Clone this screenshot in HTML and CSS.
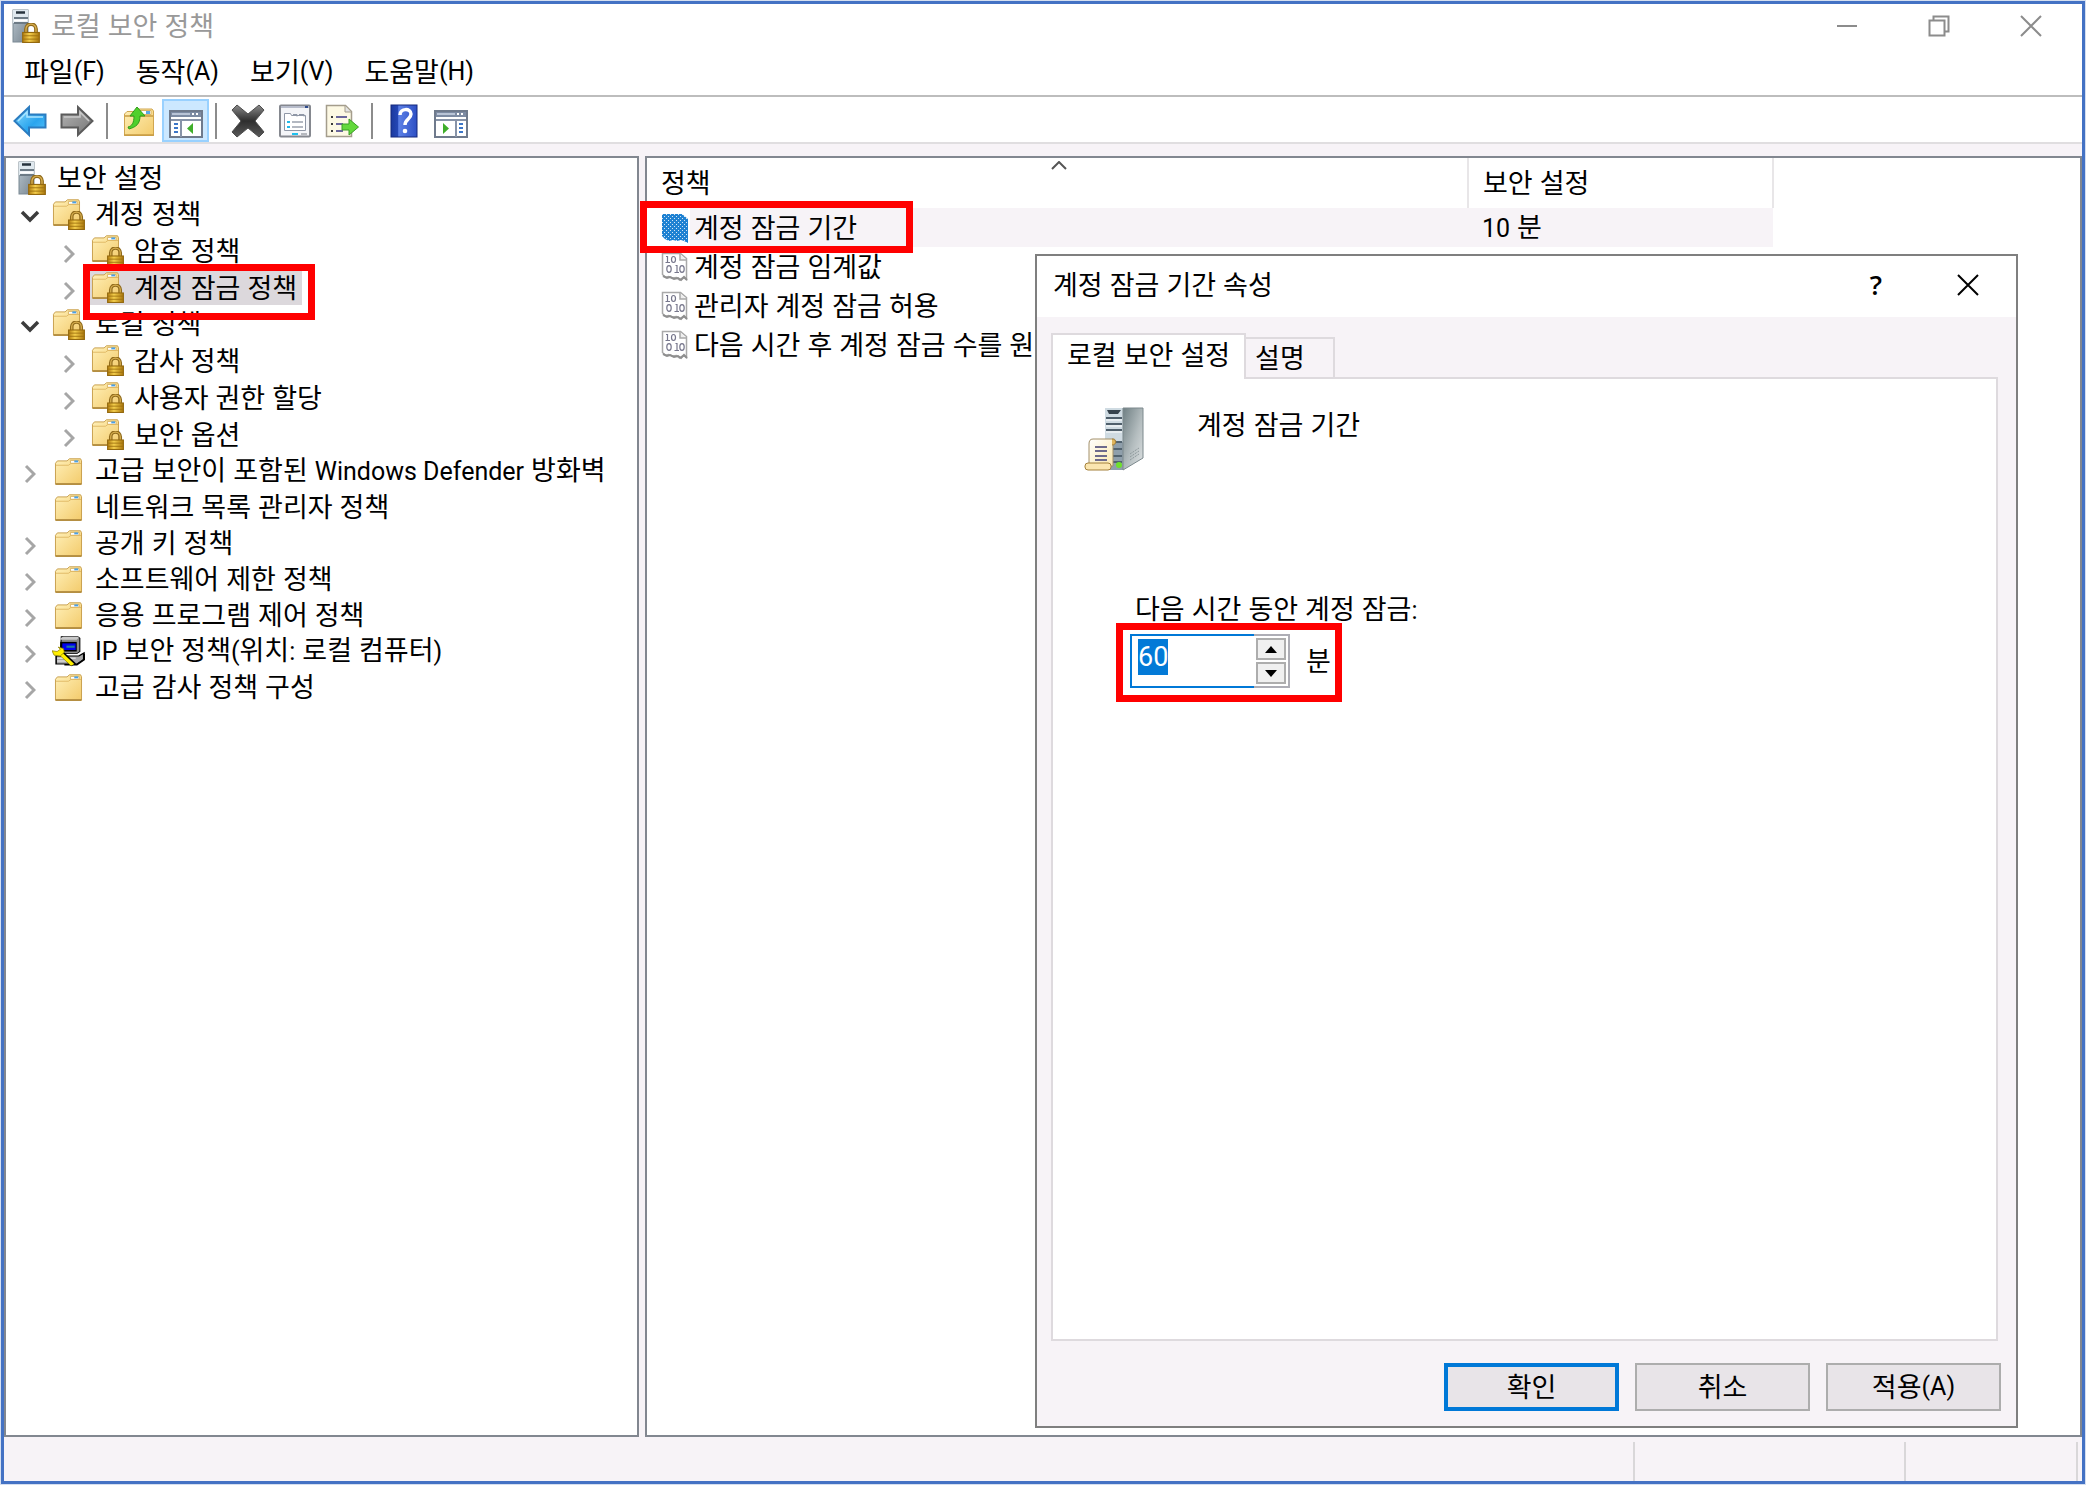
FILE: index.html
```html
<!DOCTYPE html>
<html lang="ko">

<head>
    <meta charset="UTF-8">
    <meta name="viewport" content="width=device-width, initial-scale=1.0">
    <title>로컬 보안 정책</title>
    <link rel="stylesheet" href="styles.css">
</head>

<body>
    <svg class="defs" aria-hidden="true">
        <defs>
            <linearGradient id="gFolder" x1="0" y1="0" x2="1" y2="1">
                <stop offset="0" stop-color="#fff0b8" />
                <stop offset="1" stop-color="#f3cb6c" />
            </linearGradient>
            <linearGradient id="gLock" x1="0" y1="0" x2="1" y2="0">
                <stop offset="0" stop-color="#b17c10" />
                <stop offset=".4" stop-color="#f5cf4c" />
                <stop offset="1" stop-color="#a8750c" />
            </linearGradient>
            <linearGradient id="gTower" x1="0" y1="0" x2="1" y2="1">
                <stop offset="0" stop-color="#b9c6cf" />
                <stop offset="1" stop-color="#77848f" />
            </linearGradient>
            <linearGradient id="gSide" x1="0" y1="0" x2="1" y2="1">
                <stop offset="0" stop-color="#6f7f83" />
                <stop offset=".55" stop-color="#b4bdbf" />
                <stop offset="1" stop-color="#dfe3e4" />
            </linearGradient>
            <linearGradient id="gBlue" x1="0" y1="0" x2="1" y2="1">
                <stop offset="0" stop-color="#8bdcff" />
                <stop offset=".6" stop-color="#2aa5ee" />
                <stop offset="1" stop-color="#58c4fa" />
            </linearGradient>
            <linearGradient id="gGray" x1="0" y1="0" x2="1" y2="1">
                <stop offset="0" stop-color="#b5b5b5" />
                <stop offset="1" stop-color="#757575" />
            </linearGradient>
            <linearGradient id="gCross" x1="0" y1="0" x2="0" y2="1">
                <stop offset="0" stop-color="#8a8a8a" />
                <stop offset=".5" stop-color="#2e2e2e" />
                <stop offset="1" stop-color="#5a5a5a" />
            </linearGradient>
            <linearGradient id="gHelp" x1="0" y1="0" x2="1" y2="0">
                <stop offset="0" stop-color="#1c3a9e" />
                <stop offset=".25" stop-color="#2446b4" />
                <stop offset=".3" stop-color="#5c80e6" />
                <stop offset="1" stop-color="#2d4fc4" />
            </linearGradient>
            <linearGradient id="gPaper" x1="0" y1="0" x2="1" y2="1">
                <stop offset="0" stop-color="#ffffff" />
                <stop offset="1" stop-color="#fbe7a8" />
            </linearGradient>
            <pattern id="pDots" width="4" height="4" patternUnits="userSpaceOnUse">
                <rect width="4" height="4" fill="#1f82d2" />
                <rect x="1" y="1" width="1" height="1" fill="#d4e6f5" />
                <rect x="3" y="3" width="1" height="1" fill="#d4e6f5" />
            </pattern>
        </defs>

        <symbol id="lock" viewBox="0 0 16 18">
            <path d="M3.5 9V5.500a4.500 4.500 0 0 1 9 0V9" fill="none" stroke="#8f6a1c" stroke-width="3.400" />
            <path d="M3.500 9V5.500a4.500 4.500 0 0 1 9 0V9" fill="none" stroke="#d9b050" stroke-width="1.200" />
            <rect x=".5" y="8.500" width="15" height="9" fill="url(#gLock)" stroke="#94690f" />
            <path d="M1 11.500h14M1 14.500h14" stroke="#9c700f" stroke-width=".8" />
        </symbol>

        <symbol id="server-lock" viewBox="0 0 28 34">
            <rect x="1" y="1" width="15" height="32" fill="url(#gTower)" stroke="#7b8994" />
            <path d="M1 1h15v13H1z" fill="#dfe8ee" />
            <path d="M4 3.500h9" stroke="#27333d" stroke-width="2.500" />
            <path d="M2 9h14M2 14h14" stroke="#6d7b86" stroke-width="2" />
            <path d="M2 11.500h13" stroke="#fff" stroke-width="2" />
            <use href="#lock" x="10" y="14" width="18" height="20" />
        </symbol>

        <symbol id="folder" viewBox="0 0 30 28">
            <path d="M1.500 5.500 3.500 3h10L16 .8h11.500l1 2V27h-27z" fill="url(#gFolder)" stroke="#c89f4c" />
            <path d="M17 2.500h9v3h-9z" fill="#fff" stroke="#d9b566" />
            <path d="M21 2.500h4v2h-4z" fill="#4aa0e6" />
            <path d="M2 7.500h13l2.500-1.800H28" fill="none" stroke="#e0b965" />
            <path d="M1.500 27h27" stroke="#b58f42" stroke-width="2" />
        </symbol>

        <symbol id="folder-lock" viewBox="0 0 33 31">
            <use href="#folder" x="0" y="0" width="29" height="27" />
            <use href="#lock" x="16" y="12" width="17" height="19" />
        </symbol>

        <symbol id="ip-policy" viewBox="0 0 32 42" preserveAspectRatio="none">
            <path d="M9 1h16l2 2v18l-3 3H8z" fill="#8c8c8c" stroke="#000" />
            <path d="M8 3l3-2h14l1 1-2 3H8z" fill="#c9c9c9" />
            <path d="M8 8h16v13H8z" fill="#000" />
            <path d="M10 10h13v9H10z" fill="#0000f0" />
            <path d="M14 13h8v3h-8z" fill="#1c7a9c" />
            <path d="M4 27h22l5-4v9l-7 6H4z" fill="#a8a8a8" stroke="#000" stroke-width="1.500" />
            <path d="M5 30h18M5 34h14" stroke="#dcdcdc" stroke-width="2" />
            <path d="M31 24v8l-7 7H12" fill="none" stroke="#000" stroke-width="2" />
            <path d="M8 22 21 39" stroke="#000" stroke-width="6" />
            <path d="M7 22 20 39" stroke="#ffee00" stroke-width="4" />
            <path d="M0 20l5 1 3-3-2-3 5 2 1 5-4 5-6-1z" fill="#ffee00" stroke="#8a7a00" stroke-width=".8" />
        </symbol>

        <symbol id="policy-doc" viewBox="0 0 28 30">
            <path d="M1.500 1.500h18l6 5v21l-3-2-4 2.500-3-2.500-4 .5-4-1.500-3 1-3-3z" fill="#fff" stroke="#a9a9a9" stroke-width="1.500" />
            <path d="M19 2v6h6" fill="#eee" stroke="#a9a9a9" stroke-width="1.500" />
            <path d="M2 24l4 2 3-1 4 2 4-1 3 2 3-3 3 3" fill="none" stroke="#8f8f8f" stroke-width="2" />
            <g fill="none" stroke="#77778c" stroke-width="1.200">
                <path d="M5 4.500h1.500v6M4.500 10.500H9M14.500 13.500H16v7M13.500 20.500H18" />
                <ellipse cx="12.500" cy="7.500" rx="2" ry="3" />
                <ellipse cx="8" cy="17" rx="2.200" ry="3.300" />
                <ellipse cx="21" cy="17" rx="2.200" ry="3.300" />
            </g>
        </symbol>

        <symbol id="policy-doc-selected" viewBox="0 0 28 30">
            <path d="M1 1h20l6 5v24l-4-2-3-1-4 1-4-1-4 1-4-2-3-3z" fill="url(#pDots)" />
        </symbol>

        <symbol id="chev-down" viewBox="0 0 20 14">
            <path d="M2 3l8 8 8-8" fill="none" stroke="#3c3c3c" stroke-width="3.500" />
        </symbol>

        <symbol id="chev-right" viewBox="0 0 12 20">
            <path d="M2 2l8 8-8 8" fill="none" stroke="#a6a6a6" stroke-width="3" />
        </symbol>

        <symbol id="console" viewBox="0 0 34 28">
            <rect x="1" y="1" width="32" height="26" fill="#fff" stroke="#6f7a8c" stroke-width="2" />
            <path d="M2 2h30v5H2z" fill="#7d8ba3" />
            <path d="M3 4h18" stroke="#b9c4d6" stroke-width="2" />
            <path d="M23 4h2M27 4h2" stroke="#fff" stroke-width="2" />
            <path d="M2 10h30" stroke="#8793a8" stroke-width="2" />
        </symbol>
    </svg>

    <div class="app">
        <header class="titlebar">
            <svg class="app-icon" aria-hidden="true"><use href="#server-lock" /></svg>
            <h1>로컬 보안 정책</h1>
            <div class="window-controls">
                <button type="button" aria-label="최소화">
                    <svg viewBox="0 0 22 22"><path d="M1 11h20" /></svg>
                </button>
                <button type="button" aria-label="이전 크기로 복원">
                    <svg viewBox="0 0 22 22"><path d="M1.500 5.500h15v15h-15zM5.500 5V1.500h15v15H17" /></svg>
                </button>
                <button type="button" aria-label="닫기">
                    <svg viewBox="0 0 22 22"><path d="M1 1l20 20M21 1 1 21" /></svg>
                </button>
            </div>
        </header>

        <nav class="menubar">
            <button type="button">파일<span class="latin">(F)</span></button>
            <button type="button">동작<span class="latin">(A)</span></button>
            <button type="button">보기<span class="latin">(V)</span></button>
            <button type="button">도움말<span class="latin">(H)</span></button>
        </nav>

        <div class="toolbar">
            <button type="button" aria-label="뒤로">
                <svg viewBox="0 0 34 34">
                    <path d="M1.500 17 16 3v7.500h16.500v13H16V31z" fill="url(#gBlue)" stroke="#2b7cc0" stroke-width="2" />
                    <path d="M5 17 14 8v5h16" fill="none" stroke="#a9e4ff" stroke-width="1.500" />
                </svg>
            </button>
            <button type="button" aria-label="앞으로">
                <svg viewBox="0 0 34 34">
                    <path d="M32.500 17 18 3v7.500H1.500v13H18V31z" fill="url(#gGray)" stroke="#5b5b5b" stroke-width="2" />
                    <path d="M4 13h16V8l9 9" fill="none" stroke="#c9c9c9" stroke-width="1.500" />
                </svg>
            </button>
            <span class="separator"></span>
            <button type="button" aria-label="한 수준 위로">
                <svg viewBox="0 0 34 34">
                    <path d="M2.500 10 5 7.500h8L16 5h14l1.500 2v24.500h-29z" fill="url(#gFolder)" stroke="#d0a650" />
                    <path d="M18 6.500h11v4H18z" fill="#fff" stroke="#d9b566" />
                    <path d="M24 7h4v3h-4z" fill="#5aa8e4" />
                    <path d="M3 12h28M2 31h30" stroke="#c89c43" stroke-width="1.500" />
                    <path d="M6 23c4-1 6-4 6-11H8l7-9 8 9h-5c0 8-4 11-11 13z" fill="#4fd02c" stroke="#2f9c1a" />
                </svg>
            </button>
            <button type="button" class="active" aria-label="콘솔 트리 표시/숨기기">
                <svg viewBox="0 0 34 34">
                    <use href="#console" y="6" width="34" height="28" />
                    <path d="M12 17v16" stroke="#8793a8" stroke-width="2" />
                    <path d="M5 20h4M5 24h4M5 28h4" stroke="#3c76c8" stroke-width="2" />
                    <path d="M24 19v11l-6-5.500z" fill="#3fae2a" />
                </svg>
            </button>
            <span class="separator"></span>
            <button type="button" aria-label="삭제">
                <svg viewBox="0 0 34 34">
                    <path d="M1 6l5-5 11 9L28 1l5 5-9 11 9 11-5 5-11-9-11 9-5-5 9-11z" fill="url(#gCross)" stroke="#4d4d4d" stroke-linejoin="round" />
                </svg>
            </button>
            <button type="button" aria-label="속성">
                <svg viewBox="0 0 34 34">
                    <rect x="2" y="1.500" width="30" height="31" rx="1" fill="#f4f5f8" stroke="#85888f" stroke-width="2" />
                    <path d="M3 3h28" stroke="#b7bccb" stroke-width="2" />
                    <path d="M27 3h3" stroke="#2f4b8c" stroke-width="2" />
                    <path d="M6.500 9.500h6l1 2h14v15h-21z" fill="#fff" stroke="#8f97a6" />
                    <path d="M15 10.500h4v2M21 10.500h5v2" fill="none" stroke="#8f97a6" />
                    <path d="M9 18h3M9 23h3" stroke="#22b8e8" stroke-width="2" />
                    <path d="M14 18h11M14 23h11" stroke="#9aa1ad" stroke-width="1.500" />
                    <path d="M14 30h6" stroke="#1fc0ee" stroke-width="2" />
                    <path d="M23 30h6" stroke="#b5b8be" stroke-width="2" />
                </svg>
            </button>
            <button type="button" aria-label="목록 내보내기">
                <svg viewBox="0 0 34 34">
                    <path d="M1.500 1.500h19l6 6v25h-25z" fill="#fdf9e4" stroke="#a49d8c" stroke-width="1.500" />
                    <path d="M20 2v6h6" fill="#e4e4e4" stroke="#a49d8c" />
                    <path d="M6 13h2M6 20h2M6 27h2" stroke="#3a3a3a" stroke-width="2" />
                    <path d="M11 13h11M11 20h7M11 27h7" stroke="#6b679c" stroke-width="2" />
                    <path d="M17 20h7v-5l9.500 8-9.500 8v-5h-7z" fill="#63d93c" stroke="#3a9e26" />
                </svg>
            </button>
            <span class="separator"></span>
            <button type="button" aria-label="도움말">
                <svg viewBox="0 0 34 34">
                    <rect x="4" y="1" width="26" height="32" fill="url(#gHelp)" stroke="#14297c" />
                    <path d="M13 11c0-7 11-7 11-1 0 5-6 5-6 11" fill="none" stroke="#fff" stroke-width="3.500" />
                    <circle cx="18" cy="27" r="2.300" fill="#fff" />
                </svg>
            </button>
            <button type="button" aria-label="작업 창 표시/숨기기">
                <svg viewBox="0 0 34 34">
                    <use href="#console" y="6" width="34" height="28" />
                    <path d="M22 17v16" stroke="#8793a8" stroke-width="2" />
                    <path d="M25 20h4M25 24h4M25 28h4" stroke="#3c76c8" stroke-width="2" />
                    <path d="M9 19v11l6-5.500z" fill="#3fae2a" />
                </svg>
            </button>
        </div>

        <main class="panes">
            <nav class="pane tree" aria-label="보안 설정">
                <div class="row root">
                    <svg class="icon-server" aria-hidden="true"><use href="#server-lock" /></svg>
                    <span>보안 설정</span>
                </div>
                <ul>
                    <li>
                        <div class="row">
                            <button type="button" class="toggle" aria-label="축소"><svg class="down"><use href="#chev-down" /></svg></button>
                            <a href="#"><svg class="icon"><use href="#folder-lock" /></svg>계정 정책</a>
                        </div>
                        <ul>
                            <li>
                                <div class="row">
                                    <button type="button" class="toggle" aria-label="확장"><svg class="right"><use href="#chev-right" /></svg></button>
                                    <a href="#"><svg class="icon"><use href="#folder-lock" /></svg>암호 정책</a>
                                </div>
                            </li>
                            <li>
                                <div class="row">
                                    <button type="button" class="toggle" aria-label="확장"><svg class="right"><use href="#chev-right" /></svg></button>
                                    <a href="#" class="selected"><svg class="icon"><use href="#folder-lock" /></svg>계정 잠금 정책</a>
                                    <span class="mark mark-tree"></span>
                                </div>
                            </li>
                        </ul>
                    </li>
                    <li>
                        <div class="row">
                            <button type="button" class="toggle" aria-label="축소"><svg class="down"><use href="#chev-down" /></svg></button>
                            <a href="#"><svg class="icon"><use href="#folder-lock" /></svg>로컬 정책</a>
                        </div>
                        <ul>
                            <li>
                                <div class="row">
                                    <button type="button" class="toggle" aria-label="확장"><svg class="right"><use href="#chev-right" /></svg></button>
                                    <a href="#"><svg class="icon"><use href="#folder-lock" /></svg>감사 정책</a>
                                </div>
                            </li>
                            <li>
                                <div class="row">
                                    <button type="button" class="toggle" aria-label="확장"><svg class="right"><use href="#chev-right" /></svg></button>
                                    <a href="#"><svg class="icon"><use href="#folder-lock" /></svg>사용자 권한 할당</a>
                                </div>
                            </li>
                            <li>
                                <div class="row">
                                    <button type="button" class="toggle" aria-label="확장"><svg class="right"><use href="#chev-right" /></svg></button>
                                    <a href="#"><svg class="icon"><use href="#folder-lock" /></svg>보안 옵션</a>
                                </div>
                            </li>
                        </ul>
                    </li>
                    <li>
                        <div class="row">
                            <button type="button" class="toggle" aria-label="확장"><svg class="right"><use href="#chev-right" /></svg></button>
                            <a href="#"><svg class="icon plain"><use href="#folder" /></svg><span>고급 보안이 포함된 <span class="latin">Windows Defender</span> 방화벽</span></a>
                        </div>
                    </li>
                    <li>
                        <div class="row">
                            <span class="toggle"></span>
                            <a href="#"><svg class="icon plain"><use href="#folder" /></svg>네트워크 목록 관리자 정책</a>
                        </div>
                    </li>
                    <li>
                        <div class="row">
                            <button type="button" class="toggle" aria-label="확장"><svg class="right"><use href="#chev-right" /></svg></button>
                            <a href="#"><svg class="icon plain"><use href="#folder" /></svg>공개 키 정책</a>
                        </div>
                    </li>
                    <li>
                        <div class="row">
                            <button type="button" class="toggle" aria-label="확장"><svg class="right"><use href="#chev-right" /></svg></button>
                            <a href="#"><svg class="icon plain"><use href="#folder" /></svg>소프트웨어 제한 정책</a>
                        </div>
                    </li>
                    <li>
                        <div class="row">
                            <button type="button" class="toggle" aria-label="확장"><svg class="right"><use href="#chev-right" /></svg></button>
                            <a href="#"><svg class="icon plain"><use href="#folder" /></svg>응용 프로그램 제어 정책</a>
                        </div>
                    </li>
                    <li>
                        <div class="row">
                            <button type="button" class="toggle" aria-label="확장"><svg class="right"><use href="#chev-right" /></svg></button>
                            <a href="#"><svg class="icon"><use href="#ip-policy" /></svg><span><span class="latin">IP</span> 보안 정책<span class="latin">(</span>위치<span class="latin">:</span> 로컬 컴퓨터<span class="latin">)</span></span></a>
                        </div>
                    </li>
                    <li>
                        <div class="row">
                            <button type="button" class="toggle" aria-label="확장"><svg class="right"><use href="#chev-right" /></svg></button>
                            <a href="#"><svg class="icon plain"><use href="#folder" /></svg>고급 감사 정책 구성</a>
                        </div>
                    </li>
                </ul>
            </nav>

            <section class="pane list">
                <table>
                    <thead>
                        <tr>
                            <th class="col-policy">
                                정책
                                <svg class="sort" viewBox="0 0 16 9"><path d="M1 8l7-7 7 7" /></svg>
                            </th>
                            <th class="col-setting">보안 설정</th>
                        </tr>
                    </thead>
                    <tbody>
                        <tr class="current">
                            <td>
                                <div class="policy"><svg><use href="#policy-doc-selected" /></svg>계정 잠금 기간</div>
                                <span class="mark mark-list"></span>
                            </td>
                            <td><span class="latin">10</span> 분</td>
                        </tr>
                        <tr>
                            <td><div class="policy"><svg><use href="#policy-doc" /></svg>계정 잠금 임계값</div></td>
                            <td></td>
                        </tr>
                        <tr>
                            <td><div class="policy"><svg><use href="#policy-doc" /></svg>관리자 계정 잠금 허용</div></td>
                            <td></td>
                        </tr>
                        <tr>
                            <td><div class="policy"><svg><use href="#policy-doc" /></svg>다음 시간 후 계정 잠금 수를 원</div></td>
                            <td></td>
                        </tr>
                    </tbody>
                </table>
            </section>
        </main>

        <footer class="statusbar">
            <span></span>
            <span></span>
            <span></span>
        </footer>

        <section class="dialog" role="dialog" aria-labelledby="dialogTitle">
            <header class="dialog-title">
                <h2 id="dialogTitle">계정 잠금 기간 속성</h2>
                <button type="button" class="help" aria-label="도움말">?</button>
                <button type="button" aria-label="닫기">
                    <svg viewBox="0 0 22 22"><path d="M1 1l20 20M21 1 1 21" /></svg>
                </button>
            </header>

            <div class="tabs" role="tablist">
                <button type="button" role="tab" class="tab active" aria-selected="true">로컬 보안 설정</button>
                <button type="button" role="tab" class="tab" aria-selected="false">설명</button>
            </div>

            <div class="tab-panel" role="tabpanel">
                <div class="policy-head">
                    <svg viewBox="0 0 60 64" aria-hidden="true">
                        <path d="M21 1h18v62H21z" fill="#8f9fab" />
                        <path d="M21 1h18v34H21z" fill="#cfdbe2" />
                        <path d="M23 3h14l-3 4H25z" fill="#36434d" />
                        <path d="M22 11h16M22 17h16M22 23h16" stroke="#4f5f6b" stroke-width="2" />
                        <path d="M22 13h16M22 19h16M22 25h16" stroke="#fff" />
                        <path d="M22 35h16M22 42h16M22 49h16M22 55h16" stroke="#52636f" stroke-width="2" />
                        <path d="M39 1h20v50L39 63z" fill="url(#gSide)" stroke="#7c898d" />
                        <path d="M46 50l9-6M46 53l9-6M46 47l9-6" stroke="#8e999c" stroke-dasharray="2 1" />
                        <circle cx="35" cy="58" r="3" fill="#6fe02c" />
                        <path d="M9 32h20c4 0 3 5 0 5v22H5V37c0-3 1-5 4-5z" fill="url(#gPaper)" stroke="#a3906a" />
                        <path d="M28 32c5 0 5 6 0 6" fill="#e0b55a" stroke="#a3803a" />
                        <path d="M11 40h12M11 44h12M11 49h12M11 53h12" stroke="#6d6a8c" stroke-width="2" />
                        <rect x="1" y="56" width="26" height="7" rx="3" fill="#fbe6b0" stroke="#a3803a" />
                    </svg>
                    <p>계정 잠금 기간</p>
                </div>

                <div class="field">
                    <label for="lockoutDuration">다음 시간 동안 계정 잠금<span class="latin">:</span></label>
                    <div class="field-row">
                        <div class="spinner">
                            <input type="text" id="lockoutDuration" value="60" inputmode="numeric" autocomplete="off">
                            <div class="spin-buttons">
                                <button type="button" id="spinUp" aria-label="늘리기"><svg viewBox="0 0 12 7"><path d="M6 0l6 7H0z" /></svg></button>
                                <button type="button" id="spinDown" aria-label="줄이기"><svg viewBox="0 0 12 7"><path d="M0 0h12L6 7z" /></svg></button>
                            </div>
                        </div>
                        <span>분</span>
                        <span class="mark mark-field"></span>
                    </div>
                </div>
            </div>

            <footer class="dialog-actions">
                <button type="button" class="default">확인</button>
                <button type="button">취소</button>
                <button type="button">적용<span class="latin">(A)</span></button>
            </footer>
        </section>
    </div>

    <script>
        const duration = document.getElementById('lockoutDuration');

        function step(amount) {
            const value = parseInt(duration.value, 10) || 0;
            duration.value = Math.min(99999, Math.max(0, value + amount));
            duration.select();
        }

        document.getElementById('spinUp').addEventListener('click', () => step(1));
        document.getElementById('spinDown').addEventListener('click', () => step(-1));

        duration.focus();
        duration.select();
    </script>
</body>

</html>
```
FILE: styles.css
```css
* {
    box-sizing: border-box;
}

body {
    margin: 0;
    padding: 1px;
    background-color: #d5dff0;
    color: #000;
    font-family: "Open Sans", "Noto Sans CJK KR", sans-serif;
    font-size: 27px;
    line-height: 36px;
}

h1,
h2,
p,
ul {
    margin: 0;
    padding: 0;
    font-size: 27px;
    font-weight: 400;
    list-style: none;
}

button,
input {
    font: inherit;
    color: inherit;
}

button {
    display: flex;
    align-items: center;
    justify-content: center;
    padding: 0;
    border: none;
    background: none;
}

a {
    color: inherit;
    text-decoration: none;
}

svg {
    flex-shrink: 0;
}

.defs {
    position: absolute;
    width: 0;
    height: 0;
}

.latin {
    font-family: Roboto, sans-serif;
    font-size: 25px;
}

.app {
    position: relative;
    display: flex;
    flex-direction: column;
    min-height: calc(100vh - 2px);
    border: 3px solid #4472c4;
    background-color: #f7f3f7;
}

/* title bar */
.titlebar {
    display: flex;
    align-items: center;
    height: 46px;
    padding: 0 5px 2px 8px;
    background-color: #fff;
    color: #999;
}

.app-icon {
    width: 28px;
    height: 34px;
    margin-right: 11px;
}

.window-controls {
    display: flex;
    margin-left: auto;
}

.window-controls button {
    width: 92px;
    height: 40px;
}

.window-controls svg {
    width: 22px;
    height: 22px;
    fill: none;
    stroke: #8c8c8c;
    stroke-width: 2;
}

/* menu and toolbar */
.menubar {
    display: flex;
    gap: 31px;
    height: 47px;
    padding: 0 0 2px 20px;
    border-bottom: 2px solid #bdbdbd;
    background-color: #fff;
}

.toolbar {
    display: flex;
    align-items: center;
    height: 47px;
    padding: 2px 0 0 2px;
    border-bottom: 2px solid #e0dee0;
    background-color: #fff;
}

.toolbar button {
    width: 47px;
    height: 43px;
    border: 2px solid transparent;
}

.toolbar button.active {
    border-color: #99d1ff;
    background-color: #cce8ff;
}

.toolbar svg {
    width: 34px;
    height: 34px;
}

.separator {
    width: 2px;
    height: 36px;
    margin: 0 7px 0 6px;
    background-color: #8c8c8c;
}

/* panes */
.panes {
    flex: 1;
    display: grid;
    grid-template-columns: 635px 1fr;
    gap: 6px;
    margin-top: 12px;
}

.pane {
    border: 2px solid #828790;
    background-color: #fff;
}

.tree {
    padding: 1px 0 0 12px;
}

.row {
    position: relative;
    display: flex;
    align-items: center;
    height: 36px;
}

.root {
    gap: 11px;
    height: 37px;
}

.icon-server {
    width: 28px;
    height: 34px;
}

.row a {
    display: flex;
    align-items: center;
    gap: 10px;
    height: 35px;
    padding: 0 5px 0 1px;
    white-space: nowrap;
}

.row a.selected {
    background-color: #dcd8dc;
}

.toggle {
    width: 24px;
    height: 24px;
    margin-right: 9px;
}

.down {
    width: 20px;
    height: 14px;
    margin-top: 4px;
}

.right {
    width: 12px;
    height: 20px;
    margin-top: 6px;
}

.icon {
    width: 33px;
    height: 31px;
}

.icon.plain {
    height: 27px;
}

.tree ul ul {
    padding-left: 39px;
}

.tree ul ul .row {
    height: 37px;
}

/* policy list */
table {
    border-collapse: collapse;
    table-layout: fixed;
    width: 1127px;
}

th,
td {
    padding: 0 0 0 14px;
    font-weight: 400;
    text-align: left;
    white-space: nowrap;
}

th {
    position: relative;
    height: 50px;
    border-right: 2px solid #e8e6e8;
}

.col-setting {
    width: 305px;
}

td {
    position: relative;
    height: 39px;
}

.sort {
    position: absolute;
    top: 3px;
    left: calc(50% - 6px);
    width: 16px;
    height: 9px;
    fill: none;
    stroke: #555;
    stroke-width: 2;
}

.current td {
    background-color: #f7f3f7;
}

.policy {
    display: flex;
    align-items: center;
    gap: 5px;
}

.policy svg {
    width: 28px;
    height: 30px;
}

.current td:first-child {
    background: linear-gradient(to right, #fff 43px, #f7f3f7 43px);
}

/* red highlight frames */
.mark {
    position: absolute;
    z-index: 1;
    border: 7px solid #ff0000;
    pointer-events: none;
}

.mark-tree {
    top: -5px;
    left: 26px;
    width: 232px;
    height: 56px;
}

.mark-list {
    top: -7px;
    left: -7px;
    width: 273px;
    height: 52px;
}

.mark-field {
    top: -11px;
    left: -14px;
    width: 226px;
    height: 79px;
}

/* status bar */
.statusbar {
    display: grid;
    grid-template-columns: 1fr 271px 172px;
    height: 44px;
    padding: 5px 4px 0 0;
}

.statusbar span {
    border-right: 2px solid #d9d7d9;
}

/* properties dialog */
.dialog {
    position: absolute;
    z-index: 2;
    top: 250px;
    right: 64px;
    bottom: 53px;
    left: 1031px;
    display: flex;
    flex-direction: column;
    border: 2px solid #7f7f7f;
    background-color: #f7f3f7;
}

.dialog-title {
    display: flex;
    align-items: center;
    height: 61px;
    padding: 0 2px 3px 16px;
    background-color: #fff;
}

.dialog-title h2 {
    flex: 1;
}

.dialog-title button {
    width: 92px;
    height: 56px;
}

.dialog-title .help {
    font-size: 27px;
    font-weight: 600;
}

.dialog-title svg {
    width: 22px;
    height: 22px;
    fill: none;
    stroke: #000;
    stroke-width: 2;
}

.tabs {
    display: flex;
    align-items: flex-end;
    margin: 16px 18px 0 14px;
}

.tab {
    height: 40px;
    padding: 0 28px 0 9px;
    border: 2px solid #dedade;
    border-width: 2px 2px 0 0;
}

.tab.active {
    z-index: 1;
    height: 46px;
    margin-bottom: -2px;
    padding: 0 14px 4px;
    border-width: 2px 2px 0;
    background-color: #fff;
}

.tab-panel {
    flex: 1;
    margin: 0 18px 0 14px;
    padding: 28px 31px;
    border: 2px solid #dedade;
    background-color: #fff;
}

.policy-head {
    display: flex;
    gap: 53px;
}

.policy-head svg {
    width: 60px;
    height: 64px;
}

.field {
    margin: 120px 0 0 46px;
}

.field label {
    display: block;
    padding-left: 5px;
}

.field-row {
    position: relative;
    display: flex;
    align-items: center;
    gap: 16px;
    margin-top: 5px;
}

.spinner {
    display: flex;
    width: 160px;
    height: 54px;
}

.spinner input {
    flex: 1;
    min-width: 0;
    padding: 0 6px 8px;
    border: 2px solid #0078d7;
    border-right: none;
    border-radius: 0;
    outline: none;
    background-color: #fff;
    font-family: Roboto, sans-serif;
}

.spinner input::selection {
    background-color: rgba(0, 120, 215, 0.99);
    color: #fff;
}

.spin-buttons {
    display: flex;
    flex-direction: column;
    gap: 2px;
    width: 36px;
    padding: 2px;
    border: 2px solid #adadb5;
    border-left: none;
}

.spin-buttons button {
    flex: 1;
    border: 2px solid #adadad;
    background-color: #f0f0f0;
}

.spin-buttons svg {
    width: 12px;
    height: 7px;
}

.dialog-actions {
    display: flex;
    justify-content: flex-end;
    gap: 16px;
    padding: 22px 15px 15px;
}

.dialog-actions button {
    width: 175px;
    height: 48px;
    border: 2px solid #adadad;
    background-color: #e8e4e8;
}

.dialog-actions .default {
    border: 4px solid #0078d7;
}
```
